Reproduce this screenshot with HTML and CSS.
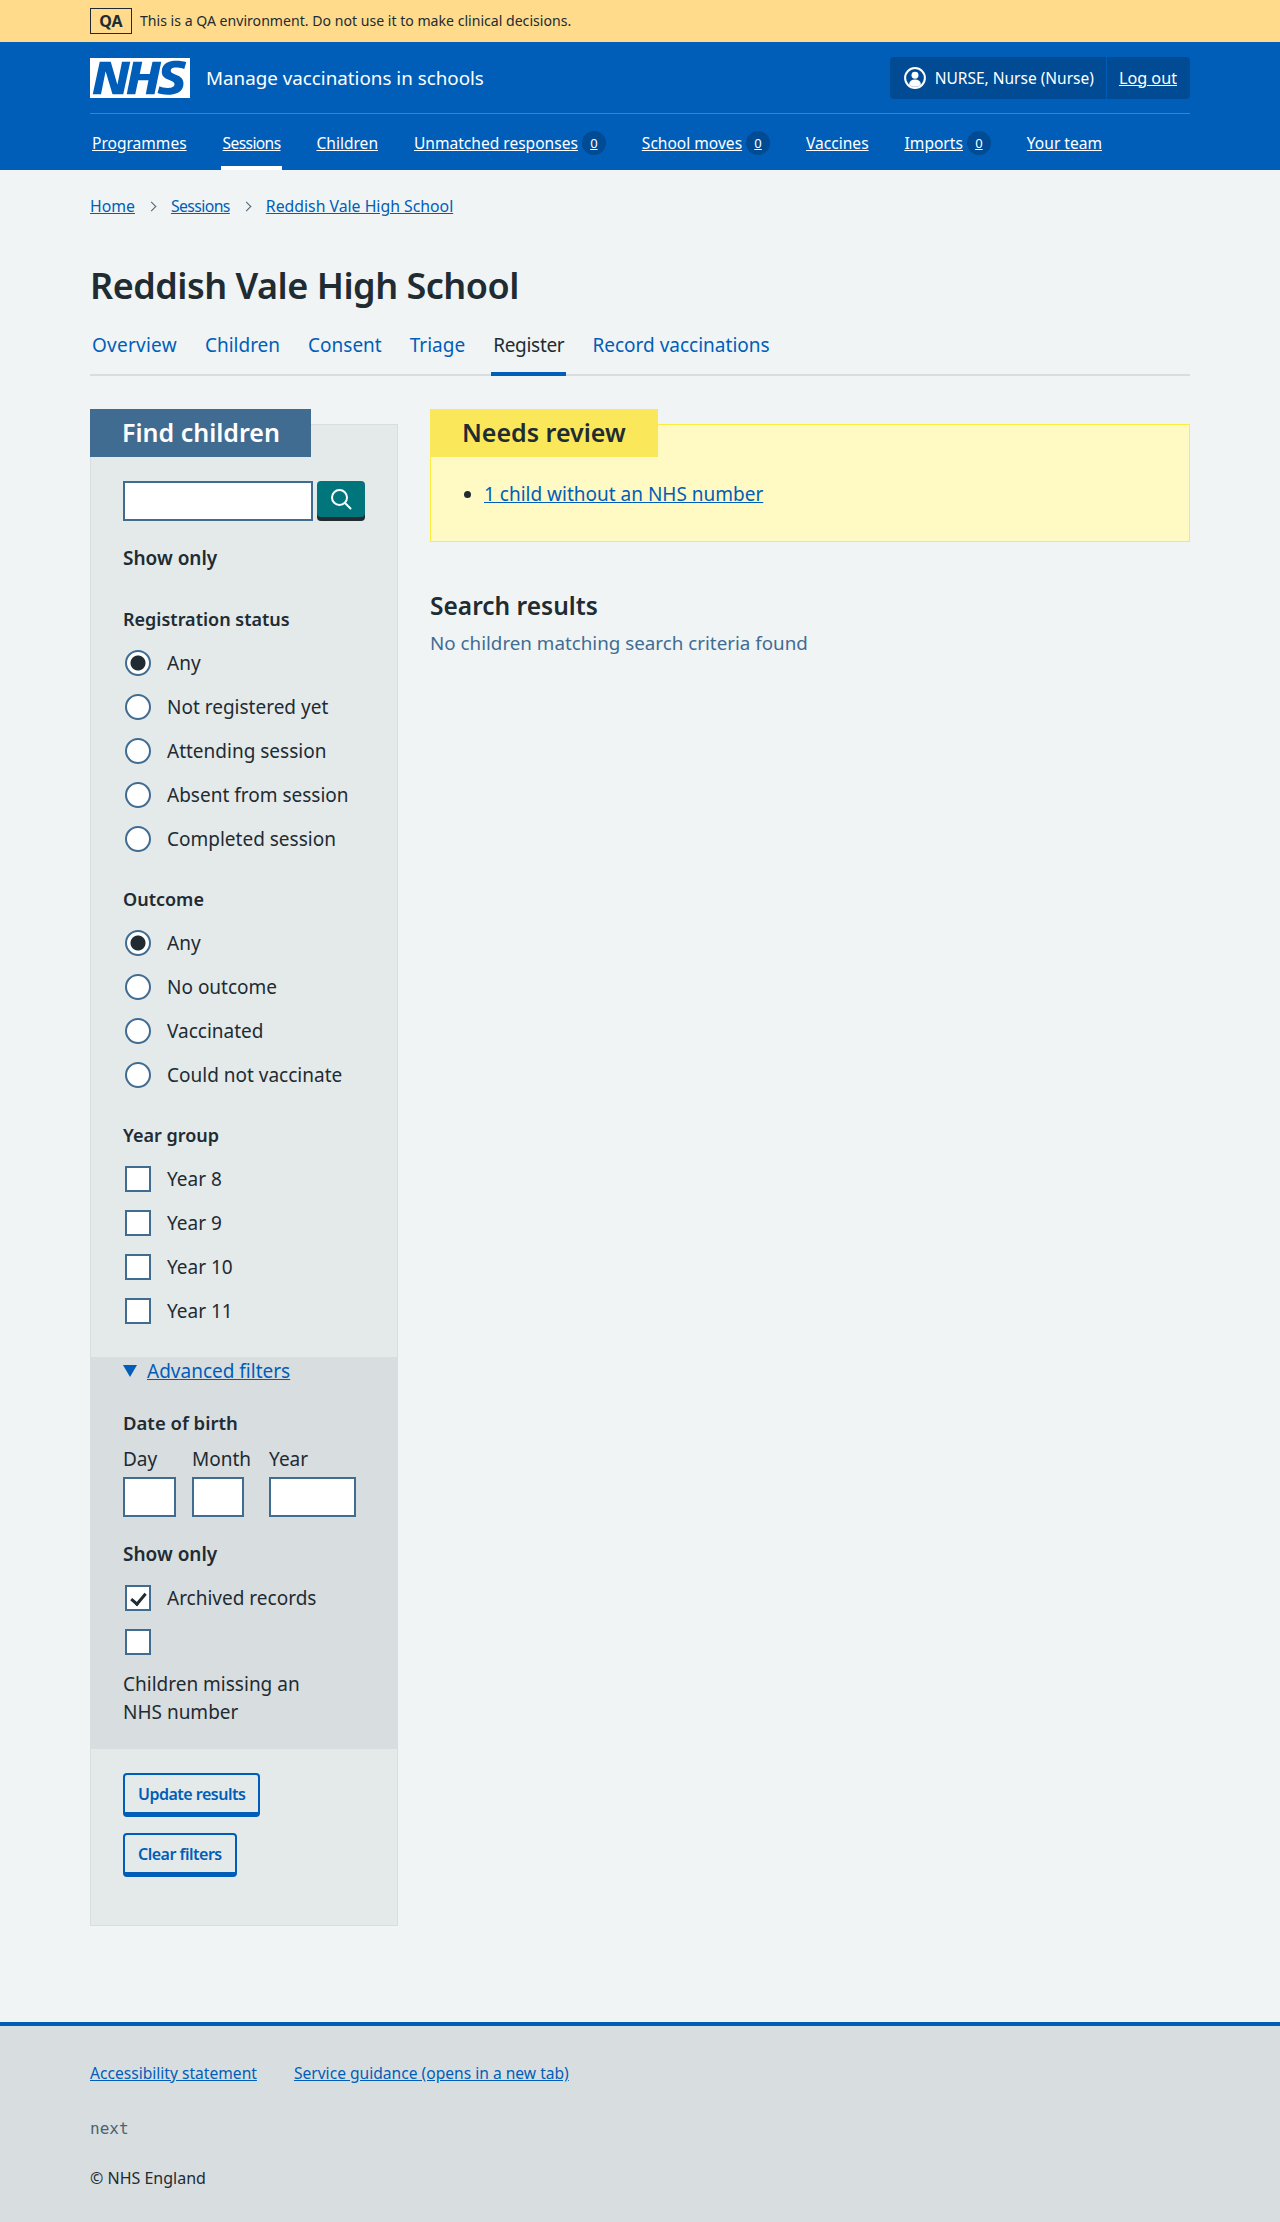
FILE: index.html
```html
<!DOCTYPE html>
<html lang="en">
<head>
    <meta charset="UTF-8">
    <meta name="viewport" content="width=device-width, initial-scale=1.0">
    <title>Reddish Vale High School</title>
    <link rel="stylesheet" href="styles.css">
</head>
<body>

    <div class="env-bar">
        <div class="wrap env-inner">
            <strong class="env-tag">QA</strong>
            <span>This is a QA environment. Do not use it to make clinical decisions.</span>
        </div>
    </div>

    <header class="header">
        <div class="wrap">
            <div class="header-top">
                <a class="logo-link" href="#">
                    <svg class="logo" viewBox="0 0 40 16" aria-label="NHS">
                        <path fill="#fff" d="M0 0h40v16H0z"/>
                        <path fill="#005eb8" d="M3.9 1.5h4.4l2.6 9h.1l1.8-9h3.3l-2.8 13H9l-2.7-9h-.1l-1.8 9H1.1M17.3 1.5h3.6l-1 4.9h4L25 1.5h3.5l-2.7 13h-3.5l1.1-5.6h-4.1l-1.2 5.6h-3.4M37.7 4.4c-.7-.3-1.6-.6-2.9-.6-1.4 0-2.5.2-2.5 1.3 0 1.8 5.1 1.2 5.1 5.1 0 3.6-3.3 4.5-6.4 4.5-1.3 0-2.9-.3-4-.7l.8-2.7c.7.4 2.1.7 3.2.7s2.8-.2 2.8-1.5c0-2.1-5.1-1.3-5.1-5 0-3.4 2.9-4.4 5.8-4.4 1.6 0 3.1.2 4 .6"/>
                    </svg>
                    <span class="service-name">Manage vaccinations in schools</span>
                </a>
                <div class="account">
                    <div class="account-user">
                        <svg class="account-icon" viewBox="0 0 24 24">
                            <circle cx="12" cy="12" r="10.8" fill="none" stroke="#fff" stroke-width="2.2"/>
                            <circle cx="12" cy="9" r="3.8" fill="#fff"/>
                            <path fill="#fff" d="M5.5 19c.3-3.600 2.800-5.500 6.500-5.500s6.200 1.900 6.500 5.500c-1.700 1.700-4 2.500-6.500 2.500s-4.800-.8-6.500-2.500z"/>
                        </svg>
                        <span>NURSE, Nurse (Nurse)</span>
                    </div>
                    <a class="account-logout" href="#">Log out</a>
                </div>
            </div>
            <nav class="nav">
                <a href="#">Programmes</a>
                <a class="active" href="#">Sessions</a>
                <a href="#">Children</a>
                <a href="#"><u>Unmatched responses</u><span class="count">0</span></a>
                <a href="#"><u>School moves</u><span class="count">0</span></a>
                <a href="#">Vaccines</a>
                <a href="#"><u>Imports</u><span class="count">0</span></a>
                <a href="#">Your team</a>
            </nav>
        </div>
    </header>

    <div class="wrap">
        <ol class="breadcrumb">
            <li><a href="#">Home</a></li>
            <li><a class="tight" href="#">Sessions</a></li>
            <li><a href="#">Reddish Vale High School</a></li>
        </ol>

        <h1 class="page-title">Reddish Vale High School</h1>

        <nav class="tabs">
            <a class="wide" href="#">Overview</a>
            <a href="#">Children</a>
            <a href="#">Consent</a>
            <a href="#">Triage</a>
            <a class="active" href="#">Register</a>
            <a href="#">Record vaccinations</a>
        </nav>

        <div class="columns">
            <aside class="filters">
                <h2 class="filters-title">Find children</h2>

                <div class="filters-body">
                    <div class="search">
                        <input class="input search-input" type="text">
                        <button class="search-btn" aria-label="Search">
                            <svg viewBox="0 0 24 24" width="24" height="24">
                                <circle cx="10.500" cy="10.500" r="7.500" fill="none" stroke="#fff" stroke-width="2"/>
                                <path d="M16 16l5.500 5.500" fill="none" stroke="#fff" stroke-width="2" stroke-linecap="round"/>
                            </svg>
                        </button>
                    </div>

                    <p class="legend show-only">Show only</p>

                    <p class="legend">Registration status</p>
                    <label class="option"><input type="radio" name="reg" checked><span>Any</span></label>
                    <label class="option"><input type="radio" name="reg"><span>Not registered yet</span></label>
                    <label class="option"><input type="radio" name="reg"><span>Attending session</span></label>
                    <label class="option"><input type="radio" name="reg"><span>Absent from session</span></label>
                    <label class="option"><input type="radio" name="reg"><span>Completed session</span></label>

                    <p class="legend legend-next">Outcome</p>
                    <label class="option"><input type="radio" name="outcome" checked><span>Any</span></label>
                    <label class="option"><input type="radio" name="outcome"><span>No outcome</span></label>
                    <label class="option"><input type="radio" name="outcome"><span>Vaccinated</span></label>
                    <label class="option"><input type="radio" name="outcome"><span>Could not vaccinate</span></label>

                    <p class="legend legend-next">Year group</p>
                    <label class="option"><input type="checkbox"><span>Year 8</span></label>
                    <label class="option"><input type="checkbox"><span>Year 9</span></label>
                    <label class="option"><input type="checkbox"><span>Year 10</span></label>
                    <label class="option"><input type="checkbox"><span>Year 11</span></label>
                </div>

                <div class="advanced">
                    <div class="advanced-summary">
                        <span class="triangle"></span>
                        <a href="#">Advanced filters</a>
                    </div>

                    <p class="legend dob-legend">Date of birth</p>
                    <div class="dob">
                        <label class="dob-item"><span>Day</span><input class="input dob-day" type="text"></label>
                        <label class="dob-item dob-item-month"><span>Month</span><input class="input dob-month" type="text"></label>
                        <label class="dob-item"><span>Year</span><input class="input dob-year" type="text"></label>
                    </div>

                    <p class="legend show-only-adv">Show only</p>
                    <label class="option"><input type="checkbox" checked><span>Archived records</span></label>
                    <label class="option option-empty"><input type="checkbox"></label>
                    <p class="missing">Children missing an NHS number</p>
                </div>

                <div class="actions">
                    <a class="btn" href="#">Update results</a>
                    <a class="btn" href="#">Clear filters</a>
                </div>
            </aside>

            <main class="results">
                <section class="review">
                    <h2 class="review-title">Needs review</h2>
                    <ul class="review-list">
                        <li><a href="#">1 child without an NHS number</a></li>
                    </ul>
                </section>

                <h2 class="results-title">Search results</h2>
                <p class="results-empty">No children matching search criteria found</p>
            </main>
        </div>
    </div>

    <footer class="footer">
        <div class="wrap">
            <div class="footer-links">
                <a href="#">Accessibility statement</a>
                <a href="#">Service guidance (opens in a new tab)</a>
            </div>
            <p class="footer-env">next</p>
            <p class="footer-copy">© NHS England</p>
        </div>
    </footer>

</body>
</html>
```

FILE: styles.css
```css
* {
    box-sizing: border-box;
}

body {
    margin: 0;
    padding: 0;
    font-family: 'Noto Sans', sans-serif;
    font-size: 19px;
    line-height: 28px;
    background-color: #f0f4f5;
    color: #212b32;
}

a {
    color: #005eb8;
}

p, h1, h2, ul, ol {
    margin: 0;
    padding: 0;
}

.wrap {
    width: 1100px;
    margin: 0 90px;
}

/* environment bar */

.env-bar {
    height: 42px;
    background-color: #ffdb8b;
    font-size: 14.1px;
}

.env-inner {
    height: 42px;
    display: flex;
    align-items: center;
    gap: 8px;
}

.env-tag {
    width: 42px;
    height: 26px;
    line-height: 24px;
    text-align: center;
    border: 1px solid #212b32;
    font-size: 16px;
}

/* header */

.header {
    height: 128px;
    background-color: #005eb8;
    color: white;
}

.header a {
    color: white;
}

.header-top {
    height: 72px;
    display: flex;
    justify-content: space-between;
    align-items: center;
    border-bottom: 1px solid #4c7fb0;
}

.logo-link {
    display: flex;
    align-items: center;
    gap: 16px;
    text-decoration: none;
}

.logo {
    width: 100px;
    height: 40px;
}

.service-name {
    font-size: 18.8px;
}

.account {
    height: 42px;
    display: flex;
    align-items: center;
    background-color: #004b93;
    border-radius: 4px;
    font-size: 15.5px;
}

.account-user {
    height: 42px;
    display: flex;
    align-items: center;
    gap: 9px;
    padding: 0 12px 0 14px;
    border-right: 1px solid #005eb8;
}

.account-icon {
    width: 22px;
    height: 22px;
}

.account-logout {
    padding: 0 13px 0 12px;
    font-size: 16.2px;
}

.nav {
    height: 56px;
    display: flex;
    gap: 32px;
    font-size: 15.55px;
}

.nav a {
    display: flex;
    align-items: center;
    gap: 4px;
    height: 56px;
    padding: 2px 2px 0 2px;
}

.nav a.active {
    border-bottom: 4px solid white;
    padding-top: 6px;
    letter-spacing: -0.6px;
}

.count {
    display: inline-block;
    width: 24px;
    height: 24px;
    line-height: 24px;
    border-radius: 50%;
    background-color: #004b93;
    text-align: center;
    font-size: 13px;
}

/* breadcrumb */

.breadcrumb {
    list-style: none;
    display: flex;
    padding-top: 24px;
    font-size: 15.8px;
    line-height: 24px;
}

.breadcrumb li + li::before {
    content: "";
    display: inline-block;
    width: 6px;
    height: 6px;
    margin: 0 16px 2px 13px;
    border-top: 1.5px solid #4c6272;
    border-right: 1.5px solid #4c6272;
    transform: rotate(45deg);
}

.breadcrumb .tight {
    letter-spacing: -0.6px;
}

/* title and tabs */

.page-title {
    margin-top: 46px;
    font-size: 36px;
    line-height: 44px;
    font-weight: 600;
    letter-spacing: -0.5px;
}

.tabs {
    margin-top: 23px;
    height: 45px;
    display: flex;
    gap: 24px;
    border-bottom: 2px solid #d8dde0;
    font-size: 19px;
}

.tabs a {
    height: 45px;
    padding: 0 2px;
    text-decoration: none;
    line-height: 28px;
}

.tabs a.wide {
    letter-spacing: 0.25px;
}

.tabs a.active {
    color: #212b32;
    border-bottom: 4px solid #005eb8;
    letter-spacing: -0.3px;
}

/* layout */

.columns {
    display: flex;
    gap: 32px;
    margin-top: 33px;
    align-items: flex-start;
}

/* filter panel */

.filters {
    width: 308px;
    margin-top: 15px;
    background-color: #e4e9ea;
    border: 1px solid #d8dde0;
}

.filters-title {
    width: 221px;
    height: 48px;
    margin: -16px 0 0 -1px;
    padding-left: 32px;
    background-color: #416c92;
    color: white;
    font-size: 25px;
    line-height: 46px;
    font-weight: 600;
}

.filters-body {
    padding: 24px 32px 0 32px;
}

.input {
    height: 40px;
    border: 2px solid #416c92;
    background-color: white;
    padding: 0 4px;
    outline: none;
    border-radius: 0;
}

.search {
    display: flex;
    gap: 4px;
}

.search-input {
    width: 190px;
}

.search-btn {
    width: 48px;
    height: 36px;
    padding: 0;
    border: none;
    border-radius: 4px;
    background-color: #00757b;
    box-shadow: 0 4px 0 #212b32;
    display: flex;
    align-items: center;
    justify-content: center;
}

.legend {
    font-weight: 600;
    font-size: 18px;
    line-height: 28px;
}

.show-only {
    margin-top: 23px;
    margin-bottom: 33px;
    font-size: 19px;
}

.legend-next {
    margin-top: 32px;
}

.option {
    display: flex;
    align-items: center;
    gap: 16px;
    height: 28px;
    margin-top: 16px;
    font-size: 19px;
}

.option input {
    appearance: none;
    -webkit-appearance: none;
    flex: none;
    width: 26px;
    height: 26px;
    margin: 0 0 0 2px;
    background-color: white;
    border: 2px solid #416c92;
}

.option input[type="radio"] {
    border-radius: 50%;
}

.option input[type="radio"]:checked {
    background-image: radial-gradient(circle, #212b32 0, #212b32 7px, white 8px);
}

.option input[type="checkbox"]:checked {
    position: relative;
}

.option input[type="checkbox"]:checked::after {
    content: "";
    position: absolute;
    left: 7px;
    top: 3px;
    width: 6px;
    height: 12px;
    border-right: 3px solid #212b32;
    border-bottom: 3px solid #212b32;
    transform: rotate(40deg);
}

/* advanced filters */

.advanced {
    margin-top: 33px;
    height: 392px;
    background-color: #d8dde0;
    padding: 0 32px;
}

.advanced-summary {
    height: 28px;
    margin-top: -1px;
    display: flex;
    align-items: center;
    gap: 10px;
    font-size: 19px;
}

.triangle {
    width: 0;
    height: 0;
    border-left: 7px solid transparent;
    border-right: 7px solid transparent;
    border-top: 12px solid #005eb8;
}

.dob-legend {
    margin-top: 24px;
    font-size: 18.500px;
}

.dob {
    display: flex;
    margin-top: 8px;
}

.dob-item {
    display: flex;
    flex-direction: column;
    gap: 4px;
    margin-right: 16px;
    font-size: 19px;
    line-height: 28px;
}

.dob-item-month {
    margin-right: 18px;
}

.dob-day {
    width: 53px;
}

.dob-month {
    width: 52px;
}

.dob-year {
    width: 87px;
}

.show-only-adv {
    margin-top: 23px;
    font-size: 19px;
}

.missing {
    margin-top: 14px;
    font-size: 19px;
    line-height: 28px;
    width: 200px;
}

.actions {
    display: flex;
    flex-direction: column;
    align-items: flex-start;
    gap: 16px;
    padding: 24px 32px 48px 32px;
}

.btn {
    display: block;
    height: 44px;
    padding: 0 13px;
    line-height: 38px;
    border: 2px solid #005eb8;
    border-bottom-width: 5px;
    border-radius: 4px;
    font-size: 16px;
    font-weight: 600;
    letter-spacing: -0.5px;
    text-decoration: none;
}

/* results column */

.results {
    flex: 1;
}

.review {
    margin-top: 15px;
    height: 118px;
    background-color: #fff9c4;
    border: 1px solid #ffeb3b;
}

.review-title {
    width: 228px;
    height: 48px;
    margin: -16px 0 0 -1px;
    padding-left: 32px;
    background-color: #fae85a;
    font-size: 25px;
    line-height: 46px;
    font-weight: 600;
}

.review-list {
    list-style: disc;
    margin: 23px 0 0 53px;
    font-size: 19px;
}

.results-title {
    margin-top: 48px;
    font-size: 24.500px;
    line-height: 32px;
    font-weight: 600;
}

.results-empty {
    margin-top: 7px;
    color: #416c92;
    font-size: 18.8px;
}

/* footer */

.footer {
    margin-top: 96px;
    height: 200px;
    border-top: 4px solid #005eb8;
    background-color: #d8dde0;
    font-size: 15.6px;
}

.footer-links {
    display: flex;
    gap: 37px;
    padding-top: 33px;
}

.footer-env {
    margin-top: 28px;
    font-family: 'DejaVu Sans Mono', monospace;
    font-size: 16px;
    color: #4c6272;
}

.footer-copy {
    margin-top: 21px;
    font-size: 16px;
}
```
